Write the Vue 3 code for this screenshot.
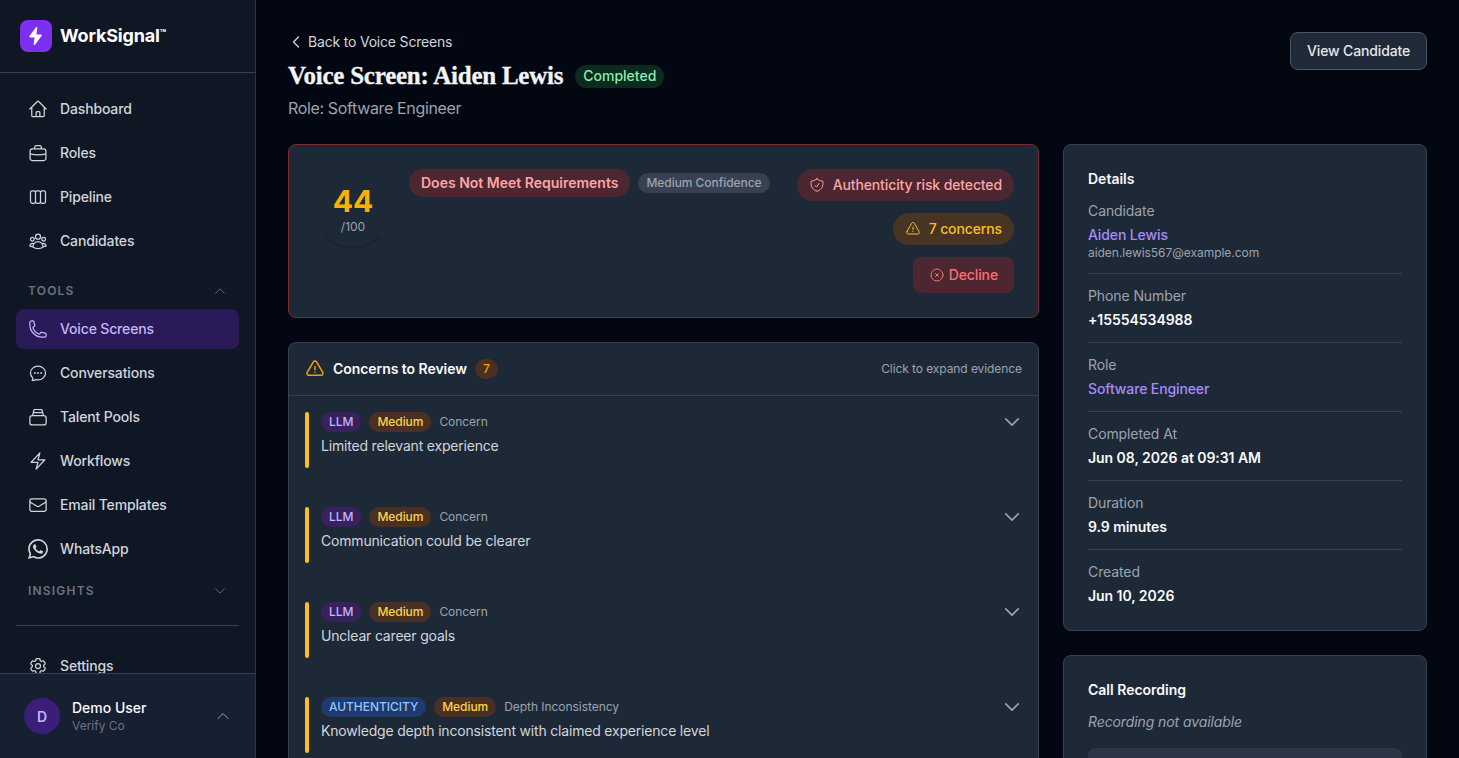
<script setup>
const icons = {
  home: 'm2.25 12 8.954-8.955c.44-.439 1.152-.439 1.591 0L21.75 12M4.5 9.75v10.125c0 .621.504 1.125 1.125 1.125H9.75v-4.875c0-.621.504-1.125 1.125-1.125h2.25c.621 0 1.125.504 1.125 1.125V21h4.125c.621 0 1.125-.504 1.125-1.125V9.75M8.25 21h8.25',
  briefcase: 'M5 7h14a2.5 2.5 0 0 1 2.5 2.5v9A2.5 2.5 0 0 1 19 21H5a2.5 2.5 0 0 1-2.5-2.5v-9A2.5 2.5 0 0 1 5 7ZM8 7V5a2 2 0 0 1 2-2h4a2 2 0 0 1 2 2v2M2.5 13c6 1.6 13 1.6 19 0M12 13.8h.01',
  columns: 'M5 4.5h2a2 2 0 0 1 2 2v11a2 2 0 0 1-2 2H5a2 2 0 0 1-2-2v-11a2 2 0 0 1 2-2ZM11 4.5h2a2 2 0 0 1 2 2v11a2 2 0 0 1-2 2h-2a2 2 0 0 1-2-2v-11a2 2 0 0 1 2-2ZM17 4.5h2a2 2 0 0 1 2 2v11a2 2 0 0 1-2 2h-2a2 2 0 0 1-2-2v-11a2 2 0 0 1 2-2Z',
  users: 'M18 18.72a9.094 9.094 0 0 0 3.741-.479 3 3 0 0 0-4.682-2.72m.94 3.198.001.031c0 .225-.012.447-.037.666A11.944 11.944 0 0 1 12 21c-2.17 0-4.207-.576-5.963-1.584A6.062 6.062 0 0 1 6 18.719m12 0a5.971 5.971 0 0 0-.941-3.197m0 0A5.995 5.995 0 0 0 12 12.75a5.995 5.995 0 0 0-5.058 2.772m0 0a3 3 0 0 0-4.681 2.72 8.986 8.986 0 0 0 3.74.477m.94-3.197a5.971 5.971 0 0 0-.94 3.197M15 6.75a3 3 0 1 1-6 0 3 3 0 0 1 6 0Zm6 3a2.25 2.25 0 1 1-4.5 0 2.25 2.25 0 0 1 4.5 0Zm-13.5 0a2.25 2.25 0 1 1-4.5 0 2.25 2.25 0 0 1 4.5 0Z',
  phone: 'M2.25 6.75c0 8.284 6.716 15 15 15h2.25a2.25 2.25 0 0 0 2.25-2.25v-1.372c0-.516-.351-.966-.852-1.091l-4.423-1.106c-.44-.11-.902.055-1.173.417l-.97 1.293c-.282.376-.769.542-1.21.38a12.035 12.035 0 0 1-7.143-7.143c-.162-.441.004-.928.38-1.21l1.293-.97c.363-.271.527-.734.417-1.173L6.963 3.102a1.125 1.125 0 0 0-1.091-.852H4.5A2.25 2.25 0 0 0 2.25 4.5v2.25Z',
  chat: 'M8.625 12a.375.375 0 1 1-.75 0 .375.375 0 0 1 .75 0Zm0 0H8.25m4.125 0a.375.375 0 1 1-.75 0 .375.375 0 0 1 .75 0Zm0 0H12m4.125 0a.375.375 0 1 1-.75 0 .375.375 0 0 1 .75 0Zm0 0h-.375M21 12c0 4.556-4.03 8.25-9 8.25a9.764 9.764 0 0 1-2.555-.337A5.972 5.972 0 0 1 5.41 20.97a5.969 5.969 0 0 1-.474-.065 4.48 4.48 0 0 0 .978-2.025c.09-.457-.133-.901-.467-1.226C3.93 16.178 3 14.189 3 12c0-4.556 4.03-8.25 9-8.25s9 3.694 9 8.25Z',
  pool: 'M5 10.25h14a2.75 2.75 0 0 1 2.75 2.75v5.75A2.75 2.75 0 0 1 19 21.5H5a2.75 2.75 0 0 1-2.75-2.75V13A2.75 2.75 0 0 1 5 10.25ZM5.5 10.25 7 4.2A1.5 1.5 0 0 1 8.5 3h7a1.5 1.5 0 0 1 1.5 1.2l1.5 6.05M6.4 6.8h11.2',
  bolt: 'm3.75 13.5 10.5-11.25L12 10.5h8.25L9.75 21.75 12 13.5H3.75Z',
  mail: 'M21.75 6.75v10.5a2.25 2.25 0 0 1-2.25 2.25h-15a2.25 2.25 0 0 1-2.25-2.25V6.75m19.5 0A2.25 2.25 0 0 0 19.5 4.5h-15a2.25 2.25 0 0 0-2.25 2.25m19.5 0v.243a2.25 2.25 0 0 1-1.07 1.916l-7.5 4.615a2.25 2.25 0 0 1-2.36 0L3.32 8.91a2.25 2.25 0 0 1-1.07-1.916V6.75',
  cog: 'M9.594 3.94c.09-.542.56-.94 1.11-.94h2.593c.55 0 1.02.398 1.11.94l.213 1.281c.063.374.313.686.645.87.074.04.147.083.22.127.325.196.72.257 1.075.124l1.217-.456a1.125 1.125 0 0 1 1.37.49l1.296 2.247a1.125 1.125 0 0 1-.26 1.431l-1.003.827c-.293.241-.438.613-.43.992a7.723 7.723 0 0 1 0 .255c-.008.378.137.75.43.991l1.004.827c.424.35.534.955.26 1.43l-1.298 2.247a1.125 1.125 0 0 1-1.369.491l-1.217-.456c-.355-.133-.75-.072-1.076.124a6.47 6.47 0 0 1-.22.128c-.331.183-.581.495-.644.869l-.213 1.281c-.09.543-.56.94-1.11.94h-2.594c-.55 0-1.019-.398-1.11-.94l-.213-1.281c-.062-.374-.312-.686-.644-.87a6.52 6.52 0 0 1-.22-.127c-.325-.196-.72-.257-1.076-.124l-1.217.456a1.125 1.125 0 0 1-1.369-.49l-1.297-2.247a1.125 1.125 0 0 1 .26-1.431l1.004-.827c.292-.24.437-.613.43-.991a6.932 6.932 0 0 1 0-.255c.007-.38-.138-.751-.43-.992l-1.004-.827a1.125 1.125 0 0 1-.26-1.43l1.297-2.247a1.125 1.125 0 0 1 1.37-.491l1.216.456c.356.133.751.072 1.076-.124.072-.044.146-.086.22-.128.332-.183.582-.495.644-.869l.214-1.28ZM15 12a3 3 0 1 1-6 0 3 3 0 0 1 6 0Z',
  shield: 'M9 12.75 11.25 15 15 9.75m-3-7.036A11.959 11.959 0 0 1 3.598 6 11.99 11.99 0 0 0 3 9.749c0 5.592 3.824 10.29 9 11.623 5.176-1.332 9-6.03 9-11.622 0-1.31-.21-2.571-.598-3.751h-.152c-3.196 0-6.1-1.248-8.25-3.285Z',
  warning: 'M12 9v3.75m-9.303 3.376c-.866 1.5.217 3.374 1.948 3.374h14.71c1.73 0 2.813-1.874 1.948-3.374L13.949 3.378c-.866-1.5-3.032-1.5-3.898 0L2.697 16.126ZM12 15.75h.007v.008H12v-.008Z',
  xCircle: 'm9.75 9.75 4.5 4.5m0-4.5-4.5 4.5M21 12a9 9 0 1 1-18 0 9 9 0 0 1 18 0Z',
  down: 'm19.5 8.25-7.5 7.5-7.5-7.5',
  up: 'm4.5 15.75 7.5-7.5 7.5 7.5',
  left: 'M15.75 19.5 8.25 12l7.5-7.5',
}

const whatsappPath = 'M17.472 14.382c-.297-.149-1.758-.867-2.03-.967-.273-.099-.471-.148-.67.15-.197.297-.767.966-.94 1.164-.173.199-.347.223-.644.075-.297-.15-1.255-.463-2.39-1.475-.883-.788-1.48-1.761-1.653-2.059-.173-.297-.018-.458.13-.606.134-.133.298-.347.446-.52.149-.174.198-.298.298-.497.099-.198.05-.371-.025-.52-.075-.149-.669-1.612-.916-2.207-.242-.579-.487-.5-.669-.51-.173-.008-.371-.01-.57-.01-.198 0-.52.074-.792.372-.272.297-1.04 1.016-1.04 2.479 0 1.462 1.065 2.875 1.213 3.074.149.198 2.096 3.2 5.077 4.487.709.306 1.262.489 1.694.625.712.227 1.36.195 1.871.118.571-.085 1.758-.719 2.006-1.413.248-.694.248-1.289.173-1.413-.074-.124-.272-.198-.57-.347m-5.421 7.403h-.004a9.87 9.87 0 01-5.031-1.378l-.361-.214-3.741.982.998-3.648-.235-.374a9.86 9.86 0 01-1.51-5.26c.001-5.45 4.436-9.884 9.888-9.884 2.64 0 5.122 1.03 6.988 2.898a9.825 9.825 0 012.893 6.994c-.003 5.45-4.437 9.884-9.885 9.884m8.413-18.297A11.815 11.815 0 0012.05 0C5.495 0 .16 5.335.157 11.892c0 2.096.547 4.142 1.588 5.945L.057 24l6.305-1.654a11.882 11.882 0 005.683 1.448h.005c6.554 0 11.89-5.335 11.893-11.893a11.821 11.821 0 00-3.48-8.413z'

const mainNav = [
  { label: 'Dashboard', icon: 'home' },
  { label: 'Roles', icon: 'briefcase' },
  { label: 'Pipeline', icon: 'columns' },
  { label: 'Candidates', icon: 'users' },
]

const toolsNav = [
  { label: 'Voice Screens', icon: 'phone', active: true },
  { label: 'Conversations', icon: 'chat' },
  { label: 'Talent Pools', icon: 'pool' },
  { label: 'Workflows', icon: 'bolt' },
  { label: 'Email Templates', icon: 'mail' },
]

const concerns = [
  { source: 'LLM', tone: 'llm', kind: 'Concern', text: 'Limited relevant experience' },
  { source: 'LLM', tone: 'llm', kind: 'Concern', text: 'Communication could be clearer' },
  { source: 'LLM', tone: 'llm', kind: 'Concern', text: 'Unclear career goals' },
  { source: 'AUTHENTICITY', tone: 'auth', kind: 'Depth Inconsistency', text: 'Knowledge depth inconsistent with claimed experience level' },
]

const details = [
  { label: 'Phone Number', value: '+15554534988' },
  { label: 'Role', value: 'Software Engineer', link: true },
  { label: 'Completed At', value: 'Jun 08, 2026 at 09:31 AM' },
  { label: 'Duration', value: '9.9 minutes' },
  { label: 'Created', value: 'Jun 10, 2026' },
]
</script>

<template>
  <div class="app">
    <aside class="sidebar">
      <div class="brand">
        <div class="brand-mark">
          <svg viewBox="0 0 24 24" width="20" height="20" fill="#fff"><path d="M13.6 2.2a.9.9 0 0 0-1.55-.7L4.2 12.1c-.5.65-.05 1.6.8 1.6h5.3l-1.1 8a.9.9 0 0 0 1.6.7l8-10.7c.48-.65.02-1.55-.8-1.55h-5.4l1-7.95Z"/></svg>
        </div>
        <span class="brand-name">WorkSignal<sup>™</sup></span>
      </div>

      <nav class="nav">
        <a v-for="item in mainNav" :key="item.label" class="nav-item">
          <svg class="nav-icon" viewBox="0 0 24 24" fill="none" stroke="currentColor" stroke-width="1.5" stroke-linecap="round" stroke-linejoin="round"><path :d="icons[item.icon]" /></svg>
          {{ item.label }}
        </a>

        <div class="nav-group">
          <span>TOOLS</span>
          <svg viewBox="0 0 24 24" width="14" height="14" fill="none" stroke="currentColor" stroke-width="1.5" stroke-linecap="round" stroke-linejoin="round"><path :d="icons.up" /></svg>
        </div>
        <a v-for="item in toolsNav" :key="item.label" class="nav-item" :class="{ active: item.active }">
          <svg class="nav-icon" viewBox="0 0 24 24" fill="none" stroke="currentColor" stroke-width="1.5" stroke-linecap="round" stroke-linejoin="round"><path :d="icons[item.icon]" /></svg>
          {{ item.label }}
        </a>
        <a class="nav-item">
          <svg class="nav-icon" viewBox="0 0 24 24" fill="currentColor"><path :d="whatsappPath" /></svg>
          WhatsApp
        </a>

        <div class="nav-group insights">
          <span>INSIGHTS</span>
          <svg viewBox="0 0 24 24" width="14" height="14" fill="none" stroke="currentColor" stroke-width="1.5" stroke-linecap="round" stroke-linejoin="round"><path :d="icons.down" /></svg>
        </div>
        <div class="nav-divider"></div>
        <a class="nav-item">
          <svg class="nav-icon" viewBox="0 0 24 24" fill="none" stroke="currentColor" stroke-width="1.5" stroke-linecap="round" stroke-linejoin="round"><path :d="icons.cog" /></svg>
          Settings
        </a>
      </nav>

      <div class="user">
        <div class="avatar">D</div>
        <div class="user-text">
          <div class="user-name">Demo User</div>
          <div class="user-org">Verify Co</div>
        </div>
        <svg class="user-chevron" viewBox="0 0 24 24" width="16" height="16" fill="none" stroke="currentColor" stroke-width="1.5" stroke-linecap="round" stroke-linejoin="round"><path :d="icons.up" /></svg>
      </div>
    </aside>

    <main class="main">
      <header class="page-head">
        <div>
          <a class="back">
            <svg viewBox="0 0 24 24" width="16" height="16" fill="none" stroke="currentColor" stroke-width="2" stroke-linecap="round" stroke-linejoin="round"><path :d="icons.left" /></svg>
            Back to Voice Screens
          </a>
          <div class="title-row">
            <h1>Voice Screen: Aiden Lewis</h1>
            <span class="status">Completed</span>
          </div>
          <p class="role">Role: Software Engineer</p>
        </div>
        <button class="view-btn">View Candidate</button>
      </header>

      <div class="columns">
        <div class="col-left">
          <section class="card score-card">
            <div class="score">
              <div class="score-num">44</div>
              <div class="score-max">/100</div>
            </div>
            <div class="verdict">
              <span class="verdict-pill">Does Not Meet Requirements</span>
              <span class="confidence">Medium Confidence</span>
            </div>
            <div class="flags">
              <span class="flag flag-red">
                <svg viewBox="0 0 24 24" width="16" height="16" fill="none" stroke="currentColor" stroke-width="1.5" stroke-linecap="round" stroke-linejoin="round"><path :d="icons.shield" /></svg>
                Authenticity risk detected
              </span>
              <span class="flag flag-amber">
                <svg viewBox="0 0 24 24" width="16" height="16" fill="none" stroke="currentColor" stroke-width="1.5" stroke-linecap="round" stroke-linejoin="round"><path :d="icons.warning" /></svg>
                7 concerns
              </span>
              <span class="decline">
                <svg viewBox="0 0 24 24" width="16" height="16" fill="none" stroke="currentColor" stroke-width="1.5" stroke-linecap="round" stroke-linejoin="round"><path :d="icons.xCircle" /></svg>
                Decline
              </span>
            </div>
          </section>

          <section class="card concerns">
            <div class="concerns-head">
              <svg viewBox="0 0 24 24" width="20" height="20" fill="none" stroke="#f59e0b" stroke-width="1.8" stroke-linecap="round" stroke-linejoin="round"><path :d="icons.warning" /></svg>
              <h2>Concerns to Review</h2>
              <span class="count">7</span>
              <span class="hint">Click to expand evidence</span>
            </div>
            <div v-for="(c, i) in concerns" :key="i" class="concern">
              <div class="concern-bar"></div>
              <div class="concern-body">
                <div class="chips">
                  <span class="chip" :class="c.tone">{{ c.source }}</span>
                  <span class="chip medium">Medium</span>
                  <span class="kind">{{ c.kind }}</span>
                </div>
                <div class="concern-text">{{ c.text }}</div>
              </div>
              <svg class="concern-chevron" viewBox="0 0 24 24" width="20" height="20" fill="none" stroke="currentColor" stroke-width="2" stroke-linecap="round" stroke-linejoin="round"><path :d="icons.down" /></svg>
            </div>
          </section>
        </div>

        <div class="col-right">
          <section class="card side-card">
            <h3>Details</h3>
            <div class="field">
              <div class="field-label">Candidate</div>
              <div class="field-value link">Aiden Lewis</div>
              <div class="field-sub">aiden.lewis567@example.com</div>
            </div>
            <div v-for="d in details" :key="d.label" class="field">
              <div class="field-label">{{ d.label }}</div>
              <div class="field-value" :class="{ link: d.link }">{{ d.value }}</div>
            </div>
          </section>

          <section class="card side-card">
            <h3>Call Recording</h3>
            <p class="no-recording">Recording not available</p>
            <div class="recording-box"></div>
          </section>
        </div>
      </div>
    </main>
  </div>
</template>

<style>
html, body {
  margin: 0;
  background: #030712;
}
</style>

<style scoped>
.app {
  display: flex;
  height: 100vh;
  overflow: hidden;
  font-family: Inter, "Liberation Sans", sans-serif;
  color: #e5e7eb;
  background: #030712;
}

.sidebar {
  flex: 0 0 256px;
  box-sizing: border-box;
  display: flex;
  flex-direction: column;
  background: #0f1725;
  border-right: 1px solid #2b3544;
}

.brand {
  flex: 0 0 72px;
  display: flex;
  align-items: center;
  gap: 8px;
  padding: 0 20px;
  margin-right: -1px;
  border-bottom: 1px solid #374151;
}

.brand-mark {
  width: 32px;
  height: 32px;
  border-radius: 8px;
  background: #7c2ff0;
  display: flex;
  align-items: center;
  justify-content: center;
}

.brand-name {
  font-size: 18px;
  line-height: 28px;
  font-weight: 700;
  letter-spacing: -0.01em;
  color: #fff;
}

.brand-name sup {
  font-size: 10px;
  line-height: 0;
  vertical-align: 5px;
}

.nav {
  flex: 1;
  min-height: 0;
  overflow: hidden;
  padding: 16px 16px 0;
}

.nav-item {
  display: flex;
  align-items: center;
  gap: 12px;
  height: 40px;
  padding: 0 12px;
  margin-bottom: 4px;
  border-radius: 8px;
  font-size: 14px;
  line-height: 20px;
  letter-spacing: -0.15px;
  font-weight: 500;
  color: #d1d5db;
}

.nav-item.active {
  background: #2a1a57;
  color: #c4b5fd;
}

.nav-icon {
  width: 20px;
  height: 20px;
  flex: none;
}

.nav-group {
  display: flex;
  align-items: center;
  justify-content: space-between;
  height: 20px;
  padding: 16px 12px 8px;
  font-size: 12px;
  line-height: 20px;
  font-weight: 600;
  letter-spacing: 0.1em;
  color: #6b7280;
}

.nav-group.insights {
  padding: 8px 12px;
}

.nav-divider {
  height: 1px;
  margin: 16px 0 20px;
  background: #374151;
}

.user {
  flex: 0 0 84px;
  display: flex;
  align-items: center;
  gap: 12px;
  padding: 0 24px;
  background: #162030;
  border-top: 1px solid #374151;
}

.avatar {
  width: 36px;
  height: 36px;
  flex: none;
  border-radius: 50%;
  background: #3b1d7a;
  color: #c4b5fd;
  font-size: 14px;
  font-weight: 600;
  display: flex;
  align-items: center;
  justify-content: center;
}

.user-text {
  flex: 1;
}

.user-name {
  font-size: 14px;
  font-weight: 500;
  line-height: 20px;
  color: #f9fafb;
}

.user-org {
  font-size: 12px;
  line-height: 16px;
  color: #6b7280;
}

.user-chevron {
  color: #9ca3af;
}

.main {
  flex: 1;
  min-width: 0;
  box-sizing: border-box;
  padding: 32px;
  overflow: hidden;
}

.page-head {
  display: flex;
  justify-content: space-between;
  align-items: flex-start;
  margin-bottom: 24px;
}

.back {
  display: flex;
  align-items: center;
  gap: 4px;
  height: 20px;
  margin-bottom: 8px;
  font-size: 14px;
  line-height: 20px;
  letter-spacing: -0.19px;
  color: #d1d5db;
}

.title-row {
  display: flex;
  align-items: center;
  gap: 12px;
  margin-bottom: 4px;
}

h1 {
  margin: 0;
  font-family: "Liberation Serif", serif;
  font-size: 25px;
  line-height: 32px;
  letter-spacing: -0.24px;
  font-weight: 700;
  -webkit-text-stroke: 0.3px #f3f4f6;
  color: #f3f4f6;
}

.status {
  height: 23px;
  padding: 0 8px;
  line-height: 22px;
  border-radius: 12px;
  background: #0d2a1f;
  color: #86efac;
  font-size: 14px;
  font-weight: 500;
}

.role {
  margin: 0;
  font-size: 16px;
  line-height: 24px;
  letter-spacing: -0.35px;
  color: #9ca3af;
}

.view-btn {
  height: 38px;
  padding: 0 16px;
  border: 1px solid #4b5563;
  border-radius: 8px;
  background: #1f2937;
  color: #e5e7eb;
  font: 500 14px/20px Inter, sans-serif;
  letter-spacing: -0.15px;
}

.columns {
  display: flex;
  gap: 24px;
  align-items: flex-start;
}

.col-left {
  flex: 0 0 751px;
  display: flex;
  flex-direction: column;
  gap: 24px;
}

.col-right {
  flex: 0 0 364px;
  display: flex;
  flex-direction: column;
  gap: 24px;
}

.card {
  box-sizing: border-box;
  background: #1e2937;
  border: 1px solid #374151;
  border-radius: 8px;
}

.score-card {
  display: flex;
  gap: 16px;
  padding: 24px;
  border-color: #7f2a30;
}

.score {
  width: 80px;
  height: 80px;
  box-sizing: border-box;
  flex: none;
  border: 2px solid transparent;
  border-bottom-color: #1a2431;
  border-radius: 50%;
  display: flex;
  flex-direction: column;
  align-items: center;
  justify-content: center;
}

.score-num {
  font-size: 30px;
  line-height: 36px;
  font-weight: 700;
  color: #fbb009;
}

.score-max {
  font-size: 12px;
  line-height: 16px;
  color: #9ca3af;
}

.verdict {
  flex: 1;
  display: flex;
  align-items: center;
  align-self: flex-start;
  gap: 8px;
}

.verdict-pill {
  padding: 0 12px;
  line-height: 28px;
  border-radius: 14px;
  background: #4c2630;
  color: #fca5a5;
  font-size: 14px;
  font-weight: 600;
}

.confidence {
  padding: 0 8px;
  line-height: 20px;
  border-radius: 10px;
  background: #374151;
  color: #9ca3af;
  font-size: 12px;
  font-weight: 500;
  letter-spacing: -0.05px;
}

.flags {
  display: flex;
  flex-direction: column;
  align-items: flex-end;
  gap: 12px;
}

.flag {
  display: flex;
  align-items: center;
  gap: 8px;
  height: 32px;
  padding: 0 12px;
  border-radius: 16px;
  font-size: 14px;
  line-height: 20px;
  letter-spacing: -0.12px;
  font-weight: 500;
}

.flag-red {
  background: #4c2630;
  color: #fca5a5;
}

.flag-amber {
  background: #473423;
  color: #fbbf24;
}

.decline {
  display: flex;
  align-items: center;
  gap: 4px;
  height: 36px;
  padding: 0 16px;
  border-radius: 8px;
  background: #4c2630;
  color: #f87171;
  font-size: 14px;
  line-height: 20px;
  letter-spacing: -0.12px;
  font-weight: 500;
}

.concerns-head {
  display: flex;
  align-items: center;
  height: 52px;
  padding: 0 16px;
  border-bottom: 1px solid #374151;
}

.concerns-head h2 {
  margin: 0 8px;
  font-size: 14px;
  line-height: 20px;
  letter-spacing: -0.05px;
  font-weight: 600;
  color: #f9fafb;
}

.count {
  width: 23px;
  height: 20px;
  border-radius: 10px;
  background: #4a3022;
  color: #f59e0b;
  font-size: 12px;
  font-weight: 500;
  line-height: 20px;
  text-align: center;
}

.hint {
  margin-left: auto;
  font-size: 12px;
  line-height: 16px;
  letter-spacing: -0.08px;
  color: #9ca3af;
}

.concern {
  display: flex;
  gap: 12px;
  padding: 16px 16px 23px;
}

.concern-bar {
  width: 4px;
  flex: none;
  border-radius: 2px;
  background: #fbbf24;
}

.concern-body {
  flex: 1;
  min-height: 56px;
}

.chips {
  display: flex;
  align-items: center;
  gap: 8px;
  height: 20px;
}

.chip {
  padding: 0 8px;
  line-height: 20px;
  border-radius: 10px;
  font-size: 12px;
  letter-spacing: -0.05px;
  font-weight: 500;
}

.chip.llm {
  background: #37215f;
  color: #c4b5fd;
}

.chip.auth {
  background: #1e3a6e;
  color: #93c5fd;
}

.chip.medium {
  background: #4a3022;
  color: #fcd34d;
}

.kind {
  font-size: 12px;
  line-height: 16px;
  letter-spacing: -0.05px;
  color: #9ca3af;
}

.concern-text {
  margin-top: 4px;
  font-size: 14px;
  line-height: 20px;
  letter-spacing: -0.19px;
  color: #d1d5db;
}

.concern-chevron {
  flex: none;
  color: #9ca3af;
}

.side-card {
  padding: 24px;
}

.side-card h3 {
  margin: 0 0 12px;
  font-size: 14px;
  line-height: 20px;
  font-weight: 600;
  color: #f9fafb;
}

.field {
  padding: 12px 0;
  border-bottom: 1px solid #374151;
}

.field:first-of-type {
  padding-top: 0;
}

.field:last-child {
  padding-bottom: 0;
  border-bottom: 0;
}

.field-label {
  margin-bottom: 4px;
  font-size: 14px;
  line-height: 20px;
  letter-spacing: -0.1px;
  color: #9ca3af;
}

.field-value {
  font-size: 14px;
  line-height: 20px;
  font-weight: 600;
  letter-spacing: -0.05px;
  color: #f9fafb;
}

.field-value.link {
  color: #a78bfa;
  font-weight: 500;
  letter-spacing: -0.12px;
}

.field-sub {
  font-size: 12px;
  line-height: 16px;
  letter-spacing: -0.04px;
  color: #9ca3af;
}

.no-recording {
  margin: 0 0 16px;
  font-size: 14px;
  line-height: 20px;
  letter-spacing: -0.1px;
  font-style: italic;
  color: #9ca3af;
}

.recording-box {
  height: 60px;
  border-radius: 8px;
  background: #2b3646;
}
</style>
